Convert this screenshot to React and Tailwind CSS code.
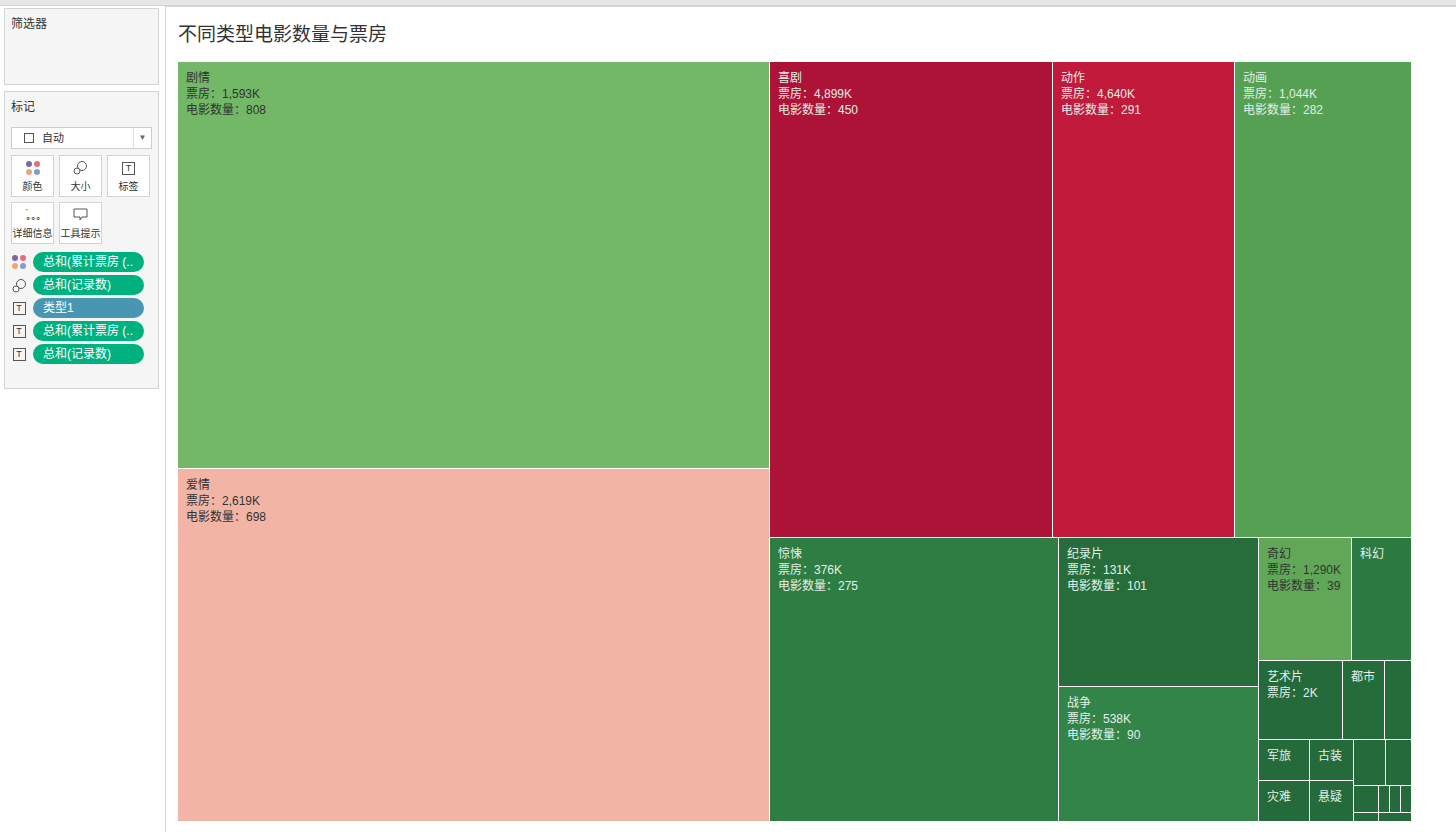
import React from 'react'

const F = { fontFamily: '"Liberation Sans","Noto Sans CJK SC",sans-serif' }

// [x, y, w, h, bg, dark-text, label, box office, count]
const cells = [
  [0, 0, 591, 406, 'bg-[#72b866]', true, '剧情', '1,593K', '808'],
  [0, 407, 591, 352, 'bg-[#f2b5a5]', true, '爱情', '2,619K', '698'],
  [592, 0, 282, 475, 'bg-[#ad1237]', false, '喜剧', '4,899K', '450'],
  [875, 0, 181, 475, 'bg-[#c11a3b]', false, '动作', '4,640K', '291'],
  [1057, 0, 176, 475, 'bg-[#55a052]', false, '动画', '1,044K', '282'],
  [592, 476, 288, 283, 'bg-[#2e7d43]', false, '惊悚', '376K', '275'],
  [881, 476, 199, 148, 'bg-[#276d3b]', false, '纪录片', '131K', '101'],
  [881, 625, 199, 134, 'bg-[#328449]', false, '战争', '538K', '90'],
  [1081, 476, 92, 122, 'bg-[#60a858]', true, '奇幻', '1,290K', '39'],
  [1174, 476, 59, 122, 'bg-[#2b7a42]', false, '科幻'],
  [1081, 599, 83, 78, 'bg-[#246a3a]', false, '艺术片', '2K'],
  [1165, 599, 41, 78, 'bg-[#256c3b]', false, '都市'],
  [1207, 599, 26, 78, 'bg-[#256c3b]', false],
  [1081, 678, 50, 40, 'bg-[#246a3a]', false, '军旅'],
  [1132, 678, 43, 40, 'bg-[#246a3a]', false, '古装'],
  [1081, 719, 50, 40, 'bg-[#246a3a]', false, '灾难'],
  [1132, 719, 43, 40, 'bg-[#246a3a]', false, '悬疑'],
  [1176, 678, 31, 45, 'bg-[#246a3a]', false],
  [1208, 678, 25, 45, 'bg-[#246a3a]', false],
  [1176, 724, 24, 26, 'bg-[#246a3a]', false],
  [1201, 724, 10, 26, 'bg-[#246a3a]', false],
  [1212, 724, 10, 26, 'bg-[#246a3a]', false],
  [1223, 724, 10, 26, 'bg-[#246a3a]', false],
  [1176, 751, 24, 8, 'bg-[#246a3a]', false],
  [1201, 751, 32, 8, 'bg-[#246a3a]', false],
]

function Dots() {
  return (
    <span className="grid grid-cols-2 gap-[2px]">
      <i className="w-[6px] h-[6px] rounded-full bg-[#7b6a9a]" />
      <i className="w-[6px] h-[6px] rounded-full bg-[#ec6b7b]" />
      <i className="w-[6px] h-[6px] rounded-full bg-[#eea57a]" />
      <i className="w-[6px] h-[6px] rounded-full bg-[#7f9ec8]" />
    </span>
  )
}
const SizeIcon = () => (
  <svg width="15" height="15" viewBox="0 0 15 15" fill="none" stroke="#555"><circle cx="9" cy="6" r="4.5" /><circle cx="4" cy="11" r="3" fill="#fff" /></svg>
)
const TIcon = () => (
  <span className="w-[13px] h-[13px] border border-[#555] text-[9px] leading-[11px] text-center text-[#333]">T</span>
)

function Btn({ icon, label }) {
  return (
    <div className="w-[43px] h-[42px] bg-white border border-[#d4d4d4] flex flex-col items-center justify-end pb-[2px] gap-[4px]">
      {icon}
      <span className="text-[10px] text-[#333]">{label}</span>
    </div>
  )
}

function Pill({ icon, text, color }) {
  return (
    <div className="flex items-center gap-[6px]">
      <span className="w-[16px] flex justify-center">{icon}</span>
      <span className={`${color} text-white text-[12px] rounded-full h-[20px] leading-[20px] px-[10px] w-[111px] whitespace-nowrap overflow-hidden`}>{text}</span>
    </div>
  )
}

export default function App() {
  return (
    <div style={F} className="w-[1456px] h-[832px] bg-[#f0f0f0] flex flex-col overflow-hidden">
      <div className="h-[6px] bg-[#e6e6e6] border-b border-[#d0d0d0]" />
      <div className="flex flex-1">
        <div className="w-[165px] bg-white flex flex-col gap-[6px] pl-[4px] pr-[6px] pt-[2px]">
          <div className="h-[77px] bg-[#f5f5f5] border border-[#d4d4d4] px-[6px] pt-[6px] text-[12px] text-[#333]">筛选器</div>
          <div className="h-[298px] bg-[#f5f5f5] border border-[#d4d4d4] px-[6px] pt-[6px]">
            <div className="text-[12px] text-[#333]">标记</div>
            <div className="mt-[11px] h-[22px] bg-white border border-[#ccc] flex items-center text-[11px] text-[#333]">
              <span className="ml-[12px] w-[10px] h-[10px] border border-[#555]" />
              <span className="ml-[8px] flex-1">自动</span>
              <span className="w-[18px] h-full border-l border-[#ddd] flex items-center justify-center text-[8px] text-[#666]">▼</span>
            </div>
            <div className="mt-[6px] flex gap-[5px] flex-wrap w-[150px]">
              <Btn icon={<Dots />} label="颜色" />
              <Btn icon={<SizeIcon />} label="大小" />
              <Btn icon={<TIcon />} label="标签" />
              <Btn icon={<span className="text-[10px] leading-[8px] text-[#555] tracking-[-1px]">·<br />∘∘∘</span>} label="详细信息" />
              <Btn icon={<svg width="15" height="14" viewBox="0 0 15 14" fill="none" stroke="#555"><path d="M1 1h13v8H9l-2 3v-3H1z" /></svg>} label="工具提示" />
            </div>
            <div className="mt-[8px] flex flex-col gap-[3px]">
              <Pill icon={<Dots />} text="总和(累计票房 (.." color="bg-[#00b180]" />
              <Pill icon={<SizeIcon />} text="总和(记录数)" color="bg-[#00b180]" />
              <Pill icon={<TIcon />} text="类型1" color="bg-[#4996b2]" />
              <Pill icon={<TIcon />} text="总和(累计票房 (.." color="bg-[#00b180]" />
              <Pill icon={<TIcon />} text="总和(记录数)" color="bg-[#00b180]" />
            </div>
          </div>
        </div>
        <div className="flex-1 bg-white border-l border-t border-[#d4d4d4] flex flex-col pl-[12px]">
          <div className="h-[55px] pt-[14px] text-[19px] text-[#333] font-['Noto_Sans_CJK_SC',serif]">不同类型电影数量与票房</div>
          <div className="relative w-[1234px] h-[760px]">
            {cells.map(([x, y, w, h, bg, dk, lab, bo, n], i) => (
              <div key={i} className={`absolute ${bg} overflow-hidden text-[12px] leading-[16px] pl-[8px] pt-[8px] ${dk ? 'text-[#333]' : 'text-[#e4efe6]'}`} style={{ left: x, top: y, width: w, height: h }}>
                {lab && <div className="whitespace-nowrap">{lab}</div>}
                {bo && <div className="whitespace-nowrap">票房：{bo}</div>}
                {n && <div className="whitespace-nowrap">电影数量：{n}</div>}
              </div>
            ))}
          </div>
        </div>
      </div>
    </div>
  )
}
